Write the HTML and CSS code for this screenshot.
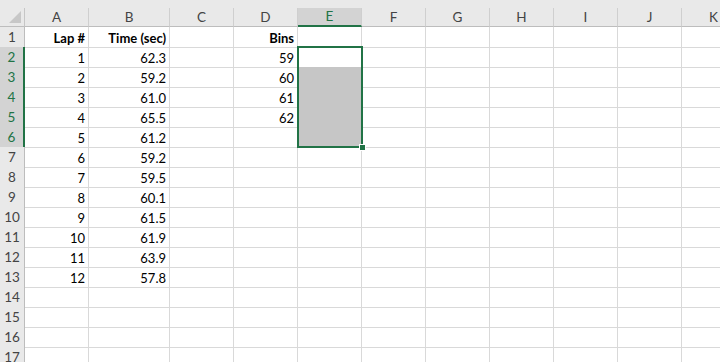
FILE: index.html
```html
<!DOCTYPE html>
<html lang="en">

<head>
    <meta charset="UTF-8">
    <meta name="viewport" content="width=device-width, initial-scale=1.0">
    <title>Lap times</title>
    <link rel="stylesheet" href="styles.css">
</head>

<body>
    <div class="sheet" id="sheet">
        <div class="top-strip"></div>
    </div>

    <div class="selection"></div>
    <div class="fill-handle"></div>

    <script>
        var cols = ['A', 'B', 'C', 'D', 'E', 'F', 'G', 'H', 'I', 'J', 'K'];
        var times = ['62.3', '59.2', '61.0', '65.5', '61.2', '59.2', '59.5', '60.1', '61.5', '61.9', '63.9', '57.8'];
        var bins = ['59', '60', '61', '62'];

        function cell(cls, text) {
            var div = document.createElement('div');
            div.className = cls;
            div.innerText = text || '';
            return div;
        }

        function buildHeader(sheet) {
            var row = cell('row head-row');
            var corner = cell('corner');
            corner.appendChild(cell('corner-mark'));
            row.appendChild(corner);
            for (var i = 0; i < cols.length; i++) {
                var cls = 'col-head';
                if (cols[i] == 'E') {
                    cls += ' picked';
                }
                row.appendChild(cell(cls, cols[i]));
            }
            sheet.appendChild(row);
        }

        function cellText(r, c) {
            if (r == 1) {
                if (c == 'A') return 'Lap #';
                if (c == 'B') return 'Time (sec)';
                if (c == 'D') return 'Bins';
                return '';
            }
            var n = r - 1;
            if (c == 'A' && n <= 12) return String(n);
            if (c == 'B' && n <= 12) return times[n - 1];
            if (c == 'D' && n <= 4) return bins[n - 1];
            return '';
        }

        function buildRows(sheet) {
            for (var r = 1; r <= 17; r++) {
                var row = cell('row');
                var head = 'row-head';
                if (r >= 2 && r <= 6) {
                    head += ' picked';
                }
                row.appendChild(cell(head, String(r)));
                for (var i = 0; i < cols.length; i++) {
                    var cls = 'cell';
                    if (r == 1) {
                        cls += ' bold';
                    }
                    if (cols[i] == 'E' && r >= 2 && r <= 6) {
                        cls += (r == 2) ? ' active' : ' shaded';
                    }
                    row.appendChild(cell(cls, cellText(r, cols[i])));
                }
                sheet.appendChild(row);
            }
        }

        var sheet = document.getElementById('sheet');
        buildHeader(sheet);
        buildRows(sheet);
    </script>
</body>

</html>
```

FILE: styles.css
```css
body {
    margin: 0;
    padding: 0;
    background-color: #fff;
    overflow: hidden;
    font-family: 'Lato', 'Liberation Sans', sans-serif;
    font-size: 13px;
    color: #000;
}

.sheet {
    width: 746px;
}

.top-strip {
    height: 8px;
    background-color: #e9e9e9;
}

.row {
    display: grid;
    grid-template-columns: 25px 64px 81px repeat(9, 64px);
    height: 20px;
}

.head-row {
    height: 19px;
}

.corner,
.col-head,
.row-head {
    box-sizing: border-box;
    background-color: #e9e9e9;
    color: #444;
    text-align: center;
    line-height: 18px;
    font-family: 'Lato', 'Liberation Sans', sans-serif;
    font-size: 13.5px;
}

.corner {
    position: relative;
    border-right: 1px solid #c6c6c6;
    border-bottom: 1px solid #bdbdbd;
}

.corner-mark {
    position: absolute;
    right: 3px;
    bottom: 3px;
    width: 0;
    height: 0;
    border-left: 12px solid transparent;
    border-bottom: 12px solid #c7c7c7;
}

.col-head {
    border-right: 1px solid #cfcfcf;
    border-bottom: 1px solid #bdbdbd;
}

.col-head.picked {
    background-color: #d3d3d3;
    color: #217346;
    border-bottom: 2px solid #217346;
    line-height: 17px;
}

.row-head {
    border-right: 1px solid #bdbdbd;
    border-bottom: 1px solid #d4d4d4;
    line-height: 20px;
}

.row-head.picked {
    background-color: #d3d3d3;
    color: #217346;
    border-right: 2px solid #217346;
}

.cell {
    box-sizing: border-box;
    border-right: 1px solid #d9d9d9;
    border-bottom: 1px solid #d9d9d9;
    text-align: right;
    padding: 0 3px;
    line-height: 22px;
    white-space: nowrap;
    overflow: hidden;
}

.bold {
    font-weight: bold;
}

.active {
    border-bottom-color: #a3a3a3;
}

.shaded {
    background-color: #c6c6c6;
    border-bottom-color: #a3a3a3;
    border-right-color: #c6c6c6;
}

.selection {
    position: absolute;
    left: 297px;
    top: 46px;
    width: 62px;
    height: 98px;
    border: 2px solid #217346;
}

.fill-handle {
    position: absolute;
    left: 359px;
    top: 144px;
    width: 5px;
    height: 5px;
    background-color: #217346;
    border: 1px solid #fff;
}
```
